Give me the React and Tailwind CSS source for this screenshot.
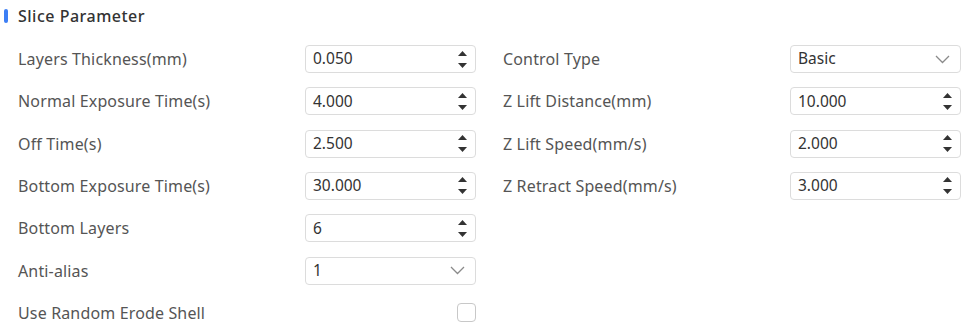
import React, { useState } from 'react';

const font = { fontFamily: '"Noto Sans", "Liberation Sans", sans-serif' };

const Spinner = () => (
  <div className="flex flex-col items-center gap-[7px]">
    <svg width="9" height="5" viewBox="0 0 9 5"><path d="M4.5 0L9 5H0z" fill="#333" /></svg>
    <svg width="9" height="5" viewBox="0 0 9 5"><path d="M0 0h9L4.5 5z" fill="#333" /></svg>
  </div>
);

const Chevron = () => (
  <svg width="15" height="9" viewBox="0 0 15 9" fill="none">
    <path d="M1 1l6.5 6.5L14 1" stroke="#8a8a8a" strokeWidth="1.3" />
  </svg>
);

const NumberInput = ({ value }) => (
  <div className="w-[171px] h-[28px] border border-[#dcdcdc] rounded-[4px] flex items-center justify-between pl-[7px] pr-[8px] bg-white">
    <span className="text-[15.5px] text-[#333]">{value}</span>
    <Spinner />
  </div>
);

const Select = ({ value }) => (
  <div className="w-[171px] h-[28px] border border-[#dcdcdc] rounded-[4px] flex items-center justify-between pl-[7px] pr-[10px] bg-white">
    <span className="text-[15.5px] text-[#333]">{value}</span>
    <Chevron />
  </div>
);

const Field = ({ label, children }) => (
  <div className="flex items-center justify-between h-[28px]">
    <span className="text-[16px] tracking-[0.15px] text-[#555]">{label}</span>
    {children}
  </div>
);

export default function App() {
  const [checked, setChecked] = useState(false);

  return (
    <div className="w-[966px] h-[328px] bg-white overflow-hidden" style={font}>
      <div className="flex items-center h-[32px] pl-[4px]">
        <div className="w-[4px] h-[14px] rounded-full bg-[#3d7ff5] mr-[10px]" />
        <span className="text-[16px] font-medium tracking-[0.5px] text-[#333]">Slice Parameter</span>
      </div>
      <div className="grid grid-cols-2 gap-x-[27px] pl-[18px] pr-[5px] mt-[13px]">
        <div className="flex flex-col gap-y-[14.33px]">
          <Field label="Layers Thickness(mm)"><NumberInput value="0.050" /></Field>
          <Field label="Normal Exposure Time(s)"><NumberInput value="4.000" /></Field>
          <Field label="Off Time(s)"><NumberInput value="2.500" /></Field>
          <Field label="Bottom Exposure Time(s)"><NumberInput value="30.000" /></Field>
          <Field label="Bottom Layers"><NumberInput value="6" /></Field>
          <Field label="Anti-alias"><Select value="1" /></Field>
          <Field label="Use Random Erode Shell">
            <button
              onClick={() => setChecked(!checked)}
              className="w-[19px] h-[19px] border border-[#c8c8c8] rounded-[4px] bg-white"
            />
          </Field>
        </div>
        <div className="flex flex-col gap-y-[14.33px]">
          <Field label="Control Type"><Select value="Basic" /></Field>
          <Field label="Z Lift Distance(mm)"><NumberInput value="10.000" /></Field>
          <Field label="Z Lift Speed(mm/s)"><NumberInput value="2.000" /></Field>
          <Field label="Z Retract Speed(mm/s)"><NumberInput value="3.000" /></Field>
        </div>
      </div>
    </div>
  );
}
